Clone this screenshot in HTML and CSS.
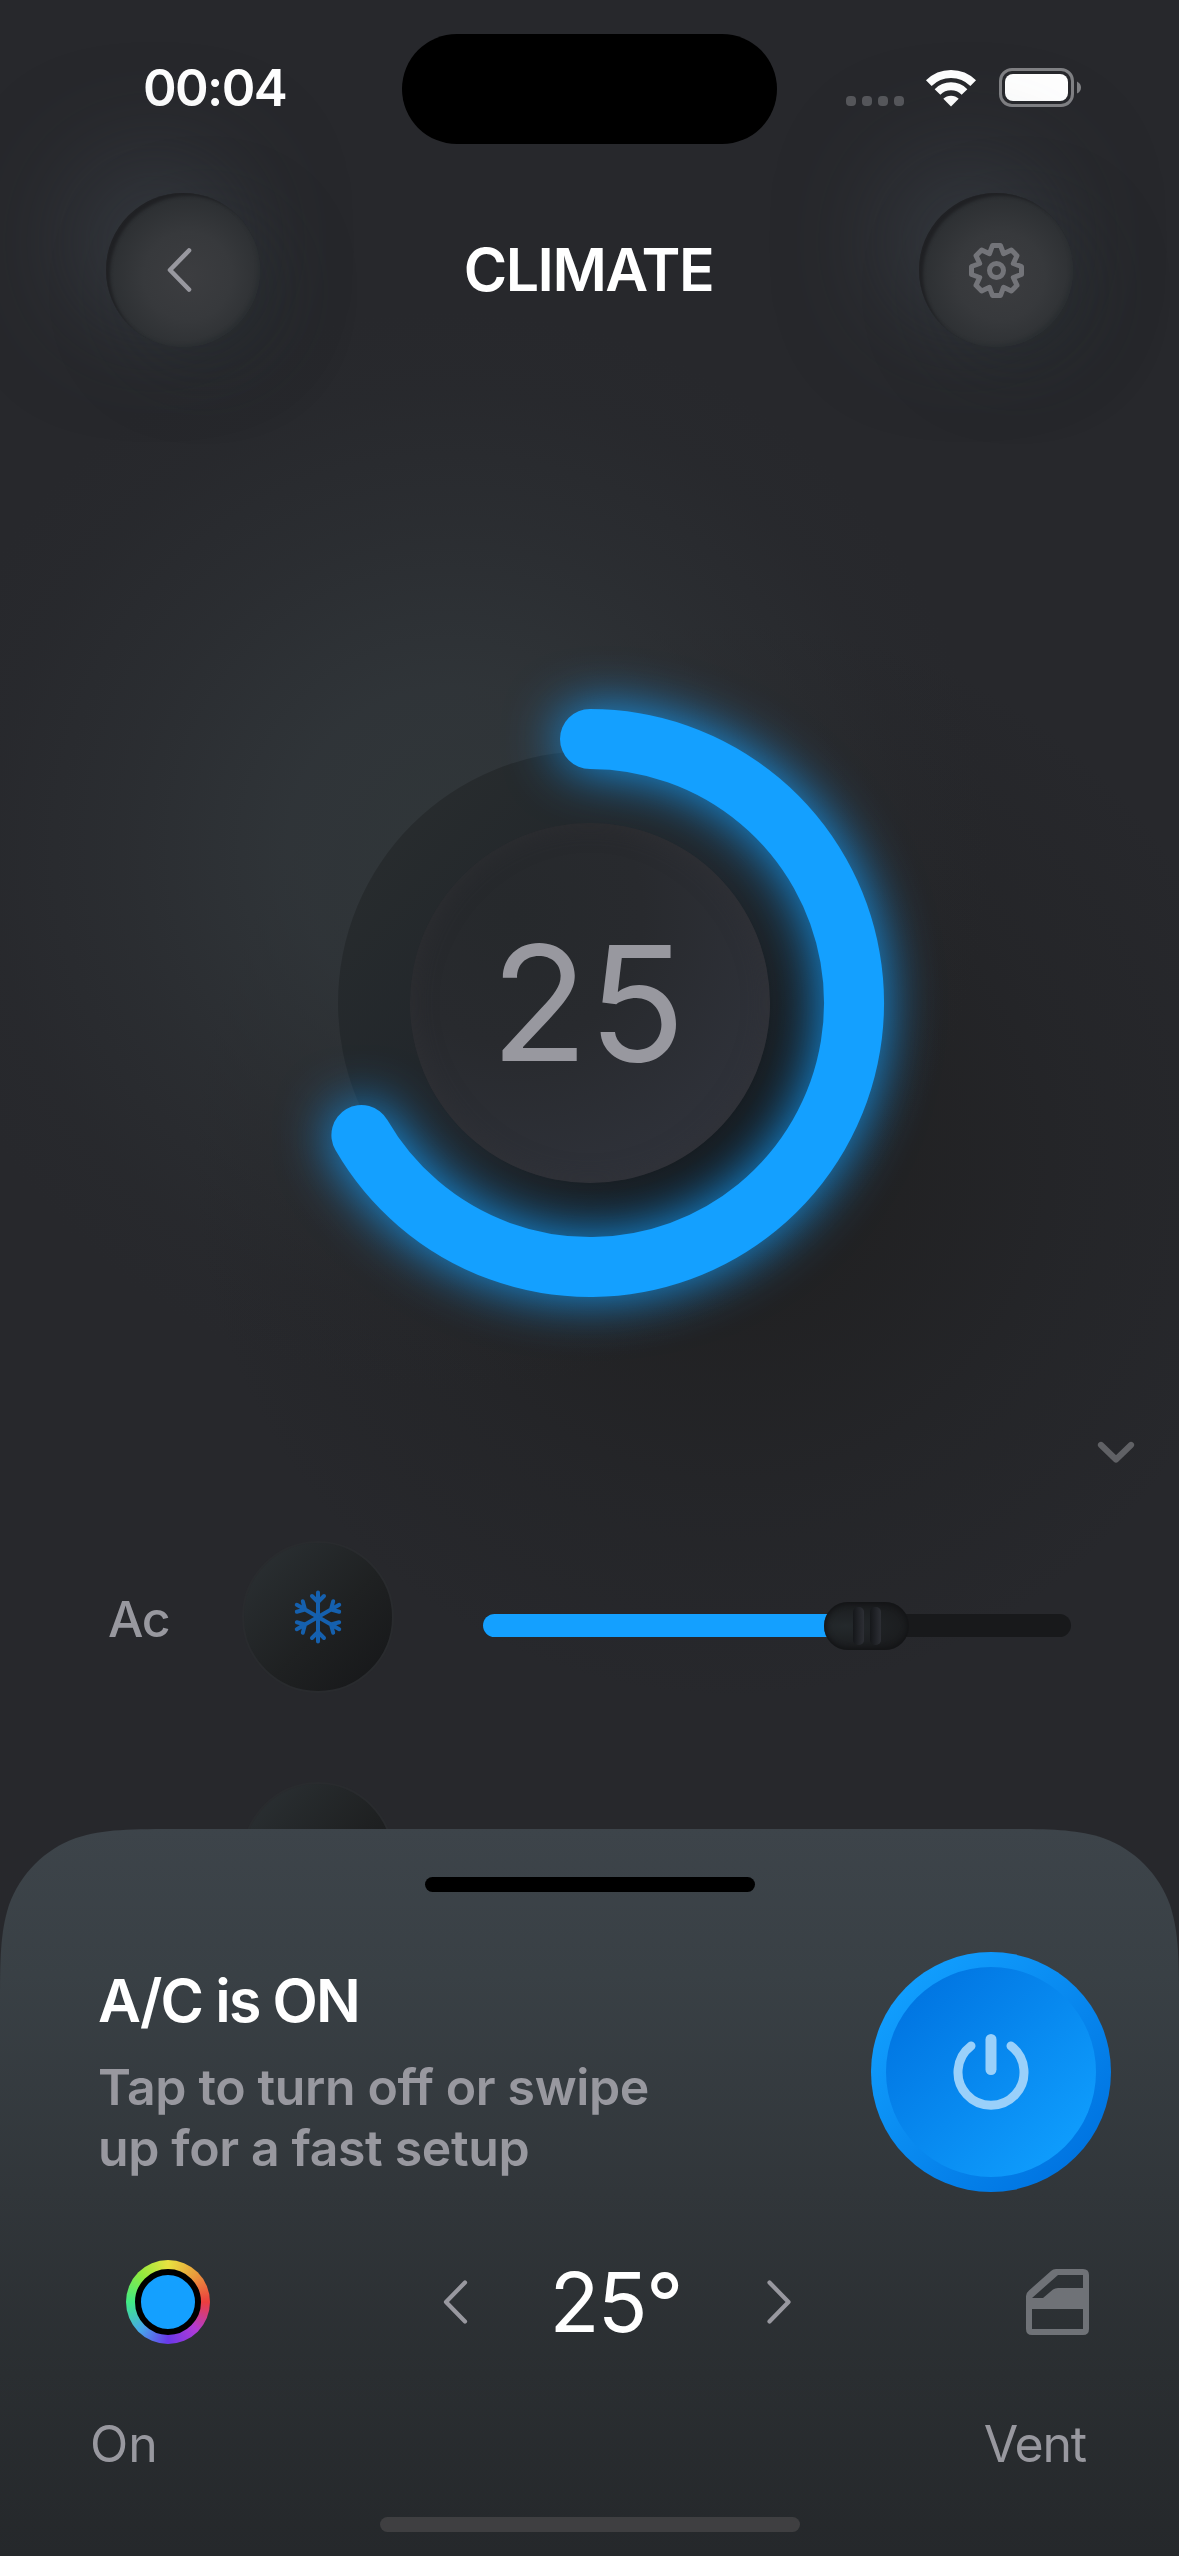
FILE: index.html
```html
<!DOCTYPE html>
<html lang="en">
<head>
<meta charset="utf-8">
<title>Climate</title>
<link rel="stylesheet" href="styles.css">
</head>
<body>
<div class="screen">
  <div class="status">
    <div class="status-time">00:04</div>
    <div class="island"></div>
    <div class="status-icons">
      <div class="dots"><i></i><i></i><i></i><i></i></div>
      <svg class="wifi" width="52" height="38" viewBox="0 0 52 38">
        <path d="M3.8 14.2a31.5 31.5 0 0 1 44.4 0" fill="none" stroke="#fff" stroke-width="8"/>
        <path d="M12.5 23a19 19 0 0 1 27 0" fill="none" stroke="#fff" stroke-width="8"/>
        <path d="M26 37.5L18.3 29.8a11 11 0 0 1 15.4 0Z" fill="#fff"/>
      </svg>
      <svg class="battery" width="82" height="39" viewBox="0 0 82 39">
        <rect x="1.5" y="1.5" width="72" height="36" rx="11.5" fill="none" stroke="#808184" stroke-width="3"/>
        <rect x="6" y="6" width="63" height="27" rx="8" fill="#fff"/>
        <path d="M78 13.5q4 2 4 6t-4 6Z" fill="#808184"/>
      </svg>
    </div>
  </div>

  <header class="header">
    <button class="round"><svg class="back" width="30" height="48" viewBox="0 0 30 48"><path d="M23 4.500L4 24L23 43.500" fill="none" stroke="#98989f" stroke-width="4.600" stroke-linecap="round" stroke-linejoin="round"/></svg></button>
    <h1 class="title">CLIMATE</h1>
    <button class="round"><svg width="60" height="60" viewBox="-30.5 -30.5 60 60"><g fill="none" stroke="#737479" stroke-width="5" stroke-linejoin="round"><path d="M-4-25H4L7-16.8L14.85-20.5L20.5-14.85L16.8-7L25-4V4L16.8 7L20.5 14.85L14.85 20.5L7 16.8L4 25H-4L-7 16.8L-14.85 20.5L-20.5 14.85L-16.8 7L-25 4V-4L-16.8-7L-20.5-14.85L-14.85-20.5L-7-16.8Z"/><circle r="7"/></g></svg></button>
  </header>

  <main class="main">
    <div class="dial">
      <svg class="arc" width="588" height="588" viewBox="-294 -294 588 588"><path d="M0-264A264 264 0 1 1-228.6 132" fill="none" stroke="#14a0ff" stroke-width="60" stroke-linecap="round"/></svg>
      <div class="dial-face"><span class="dial-value">25</span></div>
    </div>
    <div class="collapse"><svg width="40" height="28" viewBox="0 0 40 28"><path d="M5 6L20 20.5L35 6" fill="none" stroke="#606165" stroke-width="6.2" stroke-linecap="round" stroke-linejoin="round"/></svg></div>
    <div class="row">
      <span class="row-label">Ac</span>
      <div class="knob">
        <svg width="56" height="56" viewBox="-28 -28 56 56"><defs><path id="arm" d="M0 0V-24.5M-6-21L0-15L6-21"/></defs><g fill="none" stroke="#1560ae" stroke-width="4" stroke-linecap="round" stroke-linejoin="round"><use href="#arm"/><use href="#arm" transform="rotate(60)"/><use href="#arm" transform="rotate(120)"/><use href="#arm" transform="rotate(180)"/><use href="#arm" transform="rotate(240)"/><use href="#arm" transform="rotate(300)"/></g></svg>
      </div>
      <div class="slider"><div class="slider-fill"></div><div class="slider-thumb"><i></i><i></i></div></div>
    </div>
    <div class="row"><span class="row-label"></span><div class="knob"></div></div>
  </main>

  <section class="sheet">
    <div class="grabber"></div>
    <div class="power-row">
      <div class="power-text">
        <h2>A/C is ON</h2>
        <p>Tap to turn off or swipe<br>up for a fast setup</p>
      </div>
      <button class="power"><span class="power-inner"><svg width="80" height="80" viewBox="-40 -40 80 80"><g fill="none" stroke="#9ad0fa" stroke-linecap="round"><path d="M-20-26A33 33 0 1 0 20-26" stroke-width="9"/><path d="M0-32.5V-2.5" stroke-width="11"/></g></svg></span></button>
    </div>
    <div class="controls">
      <div class="swatch"><span></span></div>
      <div class="stepper">
        <svg width="30" height="48" viewBox="0 0 30 48"><path d="M24 4.5L5 24L24 43.5" fill="none" stroke="#98989f" stroke-width="4.2" stroke-linecap="round" stroke-linejoin="round"/></svg>
        <span class="stepper-value">25°</span>
        <svg width="30" height="48" viewBox="0 0 30 48"><path d="M4.5 4.5L23.500 24L4.5 43.5" fill="none" stroke="#98989f" stroke-width="4.2" stroke-linecap="round" stroke-linejoin="round"/></svg>
      </div>
      <svg class="door" width="63" height="66" viewBox="0 0 63 66"><path fill="#6f7277" fill-rule="evenodd" d="M30 0H57Q63 0 63 6V60Q63 66 57 66H6Q0 66 0 60V27Q0 24 3 21.500L25 2Q27 0 30 0ZM32 6L6 29H17L27 20.500Q29 19 32 19H57V6ZM6 40V60H57V40Z"/></svg>
    </div>
    <div class="labels"><span>On</span><span class="vent">Vent</span></div>
    <div class="home"></div>
  </section>
</div>
</body>
</html>
```
FILE: styles.css
```css
* { box-sizing: border-box; margin: 0; padding: 0; }

body {
  width: 1179px;
  height: 2556px;
  background: #27282c;
  color: #fff;
  font-family: Inter, "Liberation Sans", sans-serif;
}

button { border: 0; }
svg { display: block; flex: none; }

.screen {
  position: relative;
  width: 1179px;
  height: 2556px;
  overflow: hidden;
  background:
    radial-gradient(circle 540px at 450px 850px, rgba(50, 57, 60, 0.85) 0%, rgba(50, 56, 60, 0.75) 30%, rgba(48, 53, 57, 0.4) 60%, rgba(44, 48, 52, 0.12) 85%, rgba(39, 40, 44, 0) 100%),
    radial-gradient(circle 540px at 730px 1160px, rgba(30, 30, 31, 0.85) 0%, rgba(31, 31, 32, 0.7) 30%, rgba(32, 33, 35, 0.35) 65%, rgba(39, 40, 44, 0) 100%),
    #27282c;
}

/* status bar */
.status {
  display: grid;
  grid-template-columns: 402px 375px 402px;
  height: 144px;
  padding-top: 34px;
}
.status-time {
  padding: 24px 0 0 143px;
  font-size: 51px;
  line-height: 60px;
  font-weight: 600;
  letter-spacing: -1.6px;
}
.island { height: 110px; border-radius: 55px; background: #000; }
.status-icons { display: flex; align-items: flex-start; padding: 34px 0 0 69px; }
.dots { display: flex; gap: 6px; padding-top: 28px; }
.dots i { width: 10px; height: 10px; border-radius: 4px; background: #56575b; }
.wifi { margin: 1px 0 0 21px; }
.battery { margin-left: 22px; }

/* header */
.header {
  display: flex;
  justify-content: space-between;
  align-items: center;
  padding: 49px 106px 0;
}
.title {
  margin-right: 2px;
  font-size: 59px;
  line-height: 72px;
  font-weight: 600;
  letter-spacing: -1.5px;
}
.round {
  display: flex;
  align-items: center;
  justify-content: center;
  width: 154px;
  height: 154px;
  border-radius: 50%;
  background: radial-gradient(circle 88px at 53% 54%, #3c3d40 0%, #37393c 50%, #2a2d30 100%);
  box-shadow: inset 5px 4px 3px -1px #202124, inset -3px -3px 3px -1px #2b2f32,
    -28px -28px 110px rgba(72, 80, 90, 0.5), 20px 20px 80px rgba(34, 42, 46, 0.3);
}
.back { margin-right: 5px; }

/* dial */
.dial {
  position: relative;
  display: flex;
  align-items: center;
  justify-content: center;
  width: 504px;
  height: 504px;
  margin: 404px auto 0;
  border-radius: 50%;
  background: linear-gradient(135deg, #282c2e 10%, #20252a 50%, #131619 88%);
}
.arc {
  position: absolute;
  left: -42px;
  top: -42px;
  overflow: visible;
  filter: drop-shadow(0 0 27px rgba(20, 160, 255, 0.95));
}
.dial-face {
  position: relative;
  display: flex;
  align-items: center;
  justify-content: center;
  width: 360px;
  height: 360px;
  border-radius: 50%;
  background: radial-gradient(circle at 28% 25%, #26292c 0%, #282a2e 35%, #2f323a 78%, #2c2d32 100%);
  box-shadow: inset 0 0 24px rgba(50, 50, 54, 0.6);
}
.dial-value {
  margin-right: 3px;
  font-size: 160px;
  line-height: 1;
  font-weight: 400;
  letter-spacing: 0;
  color: #98989f;
}

.collapse { display: flex; justify-content: flex-end; padding: 184px 43px 0 0; }

/* fan rows */
.row { display: flex; align-items: center; height: 152px; margin-bottom: 89px; padding-left: 108px; }
.collapse + .row { margin-top: 74px; }
.row-label {
  width: 134px;
  padding-top: 3px;
  font-size: 50px;
  line-height: 60px;
  font-weight: 500;
  letter-spacing: -1.2px;
  color: #98989f;
}
.knob {
  display: flex;
  align-items: center;
  justify-content: center;
  width: 152px;
  height: 152px;
  border: 2px solid #292b2e;
  border-radius: 50%;
  background: linear-gradient(135deg, #2a2f32 8%, #1f2122 55%, #17181a 92%);
}
.slider {
  position: relative;
  width: 588px;
  height: 23px;
  margin: 17px 0 0 89px;
  border-radius: 12px;
  background: #18191b;
}
.slider-fill { width: 360px; height: 23px; border-radius: 12px 0 0 12px; background: #14a0ff; }
.slider-thumb {
  position: absolute;
  left: 341px;
  top: -12px;
  display: flex;
  align-items: center;
  justify-content: center;
  gap: 6px;
  width: 85px;
  height: 48px;
  border-radius: 24px;
  background: radial-gradient(ellipse at 25% 50%, #24292c, #191a1c 80%);
  box-shadow: inset 0 0 5px 2px #131416;
}
.slider-thumb i { width: 11px; height: 38px; border-radius: 5px; background: linear-gradient(90deg, #15171a, #2d2f35); }

/* bottom sheet */
.sheet {
  position: absolute;
  left: 0;
  bottom: 0;
  width: 1179px;
  height: 727px;
  padding-top: 48px;
  background: linear-gradient(180deg, #3d444a 0%, #394045 20%, #31363a 50%, #2a2e31 75%, #25282b 100%);
  clip-path: path("M0 183C0 130 0 104 9 76C20 45 45 20 76 9C104 0 130 0 183 0H996C1049 0 1075 0 1103 9C1134 20 1159 45 1170 76C1179 104 1179 130 1179 183V727H0Z");
}
.grabber { width: 330px; height: 15px; margin: 0 auto; border-radius: 8px; background: #000; }
.power-row { display: flex; justify-content: space-between; padding: 60px 68px 0 98px; }
.power-text { padding-top: 13px; }
.power-text h2 { font-size: 59px; line-height: 72px; font-weight: 600; letter-spacing: -1.8px; }
.power-text p {
  margin-top: 20px;
  font-size: 50px;
  line-height: 61px;
  font-weight: 600;
  letter-spacing: -0.37px;
  color: #98989f;
}
.power {
  padding: 15px;
  width: 240px;
  height: 240px;
  border-radius: 50%;
  background: linear-gradient(135deg, #12a0ff 10%, #0075e2 85%);
}
.power-inner {
  display: flex;
  align-items: center;
  justify-content: center;
  width: 210px;
  height: 210px;
  border-radius: 50%;
  background: linear-gradient(135deg, #0074e1 10%, #0f9dfd 88%);
}
.controls { display: flex; align-items: center; height: 84px; margin-top: 68px; padding-left: 126px; }
.swatch {
  padding: 9px;
  width: 84px;
  height: 84px;
  border-radius: 50%;
  background: conic-gradient(#e8e340, #ea9b3c 12.5%, #ec3e3e 25%, #b03ad6 37.5%, #6a38ea 50%, #46a8ea 62.5%, #40ea84 75%, #90ea3e 87.5%, #e8e340);
}
.swatch span { display: block; width: 66px; height: 66px; border: 6px solid #000; border-radius: 50%; background: #14a0ff; }
.stepper { display: flex; align-items: center; margin-left: 231px; width: 354px; justify-content: space-between; }
.stepper-value { margin-right: 5px; padding-top: 2px; font-size: 82px; line-height: 84px; font-weight: 400; letter-spacing: -1.7px; }
.door { margin-left: 231px; }
.labels {
  display: flex;
  justify-content: space-between;
  padding: 0 93px 0 90px;
  margin-top: 70px;
  font-size: 50px;
  line-height: 60px;
  color: #98989f;
}
.vent { letter-spacing: -1.2px; }
.home { width: 420px; height: 15px; margin: 43px auto 0; border-radius: 8px; background: #3f3f41; }
```
